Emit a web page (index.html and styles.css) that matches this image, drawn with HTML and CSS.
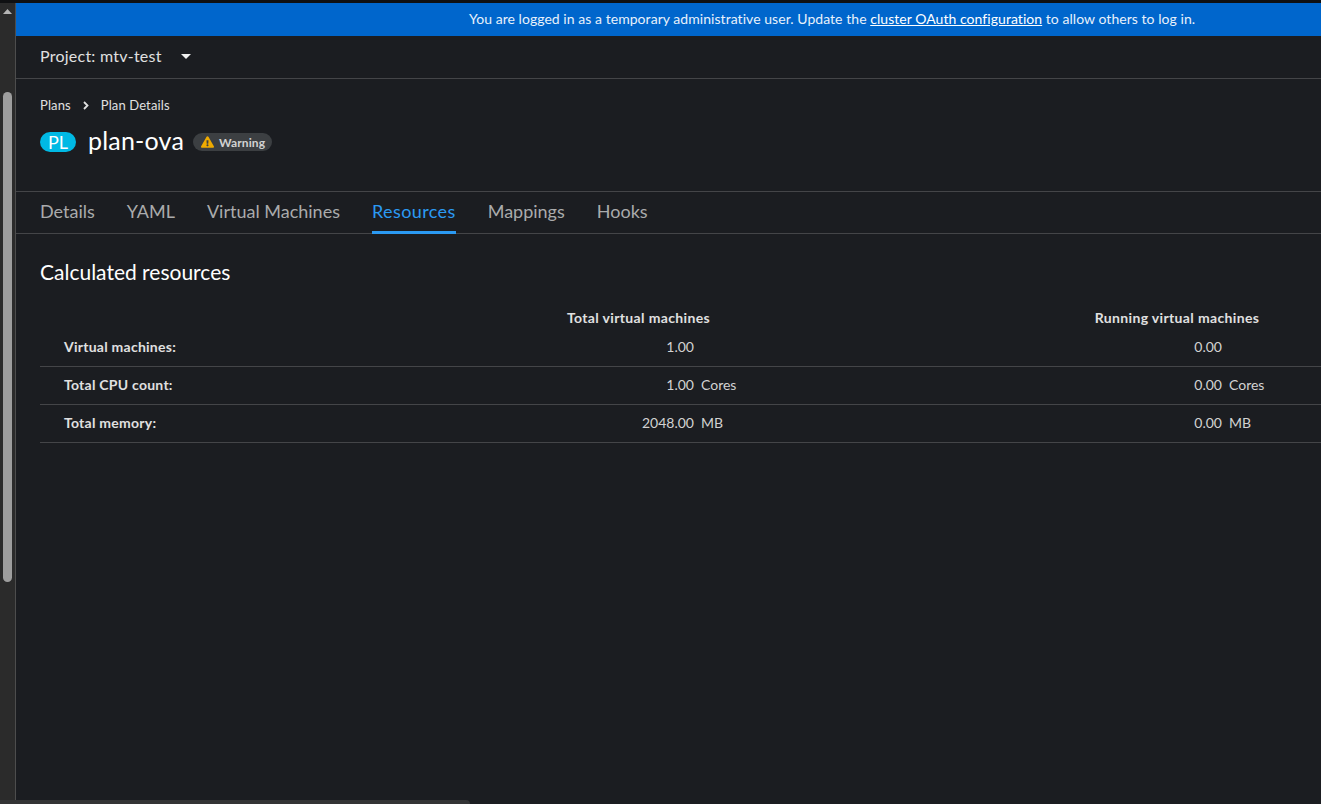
FILE: index.html
```html
<!DOCTYPE html>
<html lang="en">
<head>
<meta charset="utf-8">
<title>plan-ova</title>
<link rel="stylesheet" href="styles.css">
</head>
<body>
<div class="app">
  <aside class="vscroll">
    <svg class="vscroll-arrow" width="9" height="5" viewBox="0 0 9 5"><polygon points="4.5,0 9,5 0,5"/></svg>
    <div class="vscroll-thumb"></div>
  </aside>
  <main class="content">
    <div class="banner"><span>You are logged in as a temporary administrative user. Update the <a class="banner-link" href="#">cluster OAuth configuration</a> to allow others to log in.</span></div>
    <div class="project-bar">
      <span class="project-name">Project: mtv-test</span>
      <svg class="caret" width="10" height="5" viewBox="0 0 10 5"><polygon points="0,0 10,0 5,5"/></svg>
    </div>
    <header class="page-head">
      <nav class="breadcrumb">
        <span>Plans</span>
        <svg class="crumb-sep" width="6" height="9" viewBox="0 0 6 9"><polyline points="1,1 4.5,4.5 1,8"/></svg>
        <span>Plan Details</span>
      </nav>
      <div class="title-row">
        <span class="res-badge">PL</span>
        <h1 class="title">plan-ova</h1>
        <span class="status">
          <svg class="warn-icon" width="13" height="12" viewBox="0 0 576 512"><path d="M569.517 440.013C587.975 472.007 564.806 512 527.94 512H48.054c-36.937 0-59.999-40.055-41.577-71.987L246.423 24c18.467-32.009 64.72-31.951 83.154 0l239.94 416.013zM288 354c-25.405 0-46 20.595-46 46s20.595 46 46 46 46-20.595 46-46-20.595-46-46-46zm-43.673-165.346l7.418 136c.347 6.364 5.609 11.346 11.982 11.346h48.546c6.373 0 11.635-4.982 11.982-11.346l7.418-136c.375-6.874-5.098-12.654-11.982-12.654h-63.383c-6.884 0-12.356 5.78-11.981 12.654z"/></svg>
          Warning
        </span>
      </div>
    </header>
    <nav class="tabs">
      <a class="tab">Details</a>
      <a class="tab">YAML</a>
      <a class="tab">Virtual Machines</a>
      <a class="tab tab-active">Resources</a>
      <a class="tab">Mappings</a>
      <a class="tab">Hooks</a>
    </nav>
    <section class="section">
      <h2 class="section-title">Calculated resources</h2>
      <div class="table-head">
        <span></span>
        <span class="th">Total virtual machines</span>
        <span class="th">Running virtual machines</span>
      </div>
      <div class="table-row">
        <span class="label">Virtual machines:</span>
        <span class="num">1.00</span><span class="unit"></span>
        <span class="num">0.00</span><span class="unit"></span>
      </div>
      <div class="table-row">
        <span class="label">Total CPU count:</span>
        <span class="num">1.00</span><span class="unit">Cores</span>
        <span class="num">0.00</span><span class="unit">Cores</span>
      </div>
      <div class="table-row">
        <span class="label">Total memory:</span>
        <span class="num">2048.00</span><span class="unit">MB</span>
        <span class="num">0.00</span><span class="unit">MB</span>
      </div>
    </section>
  </main>
</div>
<div class="hscroll"></div>
</body>
</html>
```

FILE: styles.css
```css
* { box-sizing: border-box; }
html, body { margin: 0; height: 100%; overflow: hidden; }
body {
  background: #1b1d21;
  color: #e0e0e0;
  font-family: "Lato", "Liberation Sans", sans-serif;
  font-size: 14px;
  position: relative;
}
.app { display: flex; height: 100%; padding-top: 3px; background: #0f1012; }
.vscroll {
  flex: 0 0 16px;
  background: #2b2b2b;
  border-right: 1px solid #4d4d4d;
  display: flex;
  flex-direction: column;
  align-items: center;
  padding-top: 6px;
  padding-right: 1px;
}
.vscroll-arrow { fill: #b5b5b5; display: block; }
.vscroll-thumb {
  width: 9px;
  height: 490px;
  margin-top: 78px;
  border-radius: 5px;
  background: #9e9e9e;
}
.content { flex: 1; min-width: 0; background: #1b1d21; overflow: hidden; }
.banner {
  height: 33px;
  background: #0066cc;
  color: #e8f1fb;
  display: flex;
  align-items: center;
  justify-content: center;
  padding: 0 0 3px 327px;
  letter-spacing: .05px;
  white-space: pre;
}
.banner-link { color: #fff; text-decoration: underline; }
.project-bar {
  height: 43px;
  border-bottom: 1px solid #444548;
  display: flex;
  align-items: center;
  padding: 0 0 2px 24px;
  font-size: 16px;
  letter-spacing: .24px;
  color: #e0e0e0;
}
.project-name { padding-bottom: 2px; }
.caret { fill: #f0f0f0; margin-left: 19px; }
.page-head { height: 113px; border-bottom: 1px solid #444548; padding: 18px 24px 0; }
.breadcrumb { display: flex; align-items: center; gap: 12px; font-size: 13px; letter-spacing: .12px; height: 16px; color: #e0e0e0; }
.crumb-sep { fill: none; stroke: #e0e0e0; stroke-width: 1.8; }
.title-row { display: flex; align-items: center; margin-top: 15px; height: 28px; }
.res-badge {
  width: 36px;
  height: 20px;
  border-radius: 10px;
  background: #00b9e4;
  color: #fff;
  font-size: 18px;
  display: flex;
  align-items: center;
  justify-content: center;
}
.title { margin: 0 0 4px 12px; font-size: 25px; letter-spacing: .2px; font-weight: 400; color: #fff; }
.status {
  margin-left: 9px;
  height: 18px;
  width: 79px;
  border-radius: 9px;
  background: #3c3f42;
  color: #d2d2d2;
  font-size: 12px;
  letter-spacing: .1px;
  font-weight: 700;
  display: flex;
  align-items: center;
  gap: 5px;
  padding-left: 8px;
}
.warn-icon { fill: #f0ab00; }
.tabs { height: 42px; border-bottom: 1px solid #444548; display: flex; gap: 32px; padding-left: 24px; }
.tab { display: flex; align-items: center; height: 42px; padding-bottom: 4px; font-size: 18px; color: #aaabac; }
.tab-active { color: #2b9af3; border-bottom: 3px solid #2b9af3; padding: 0 0 1px; letter-spacing: .4px; }
.section { padding: 0 0 0 24px; }
.section-title { margin: 26px 0 0; font-size: 21px; font-weight: 400; color: #fff; height: 24px; line-height: 24px; }
.table-head {
  display: grid;
  grid-template-columns: 270px 657px 420px;
  margin-top: 24px;
  height: 21px;
  padding-bottom: 3px;
  align-items: center;
  font-size: 14px;
  letter-spacing: .35px;
  font-weight: 700;
  color: #e0e0e0;
}
.th { text-align: center; white-space: nowrap; }
.table-row {
  display: grid;
  grid-template-columns: 270px 384px 200px 328px 100px;
  height: 38px;
  padding-bottom: 2px;
  align-items: center;
  width: 1281px;
  border-bottom: 1px solid #444548;
  font-size: 14px;
  color: #d2d2d2;
}
.label { padding-left: 24px; font-weight: 700; letter-spacing: .25px; color: #e0e0e0; }
.num { text-align: right; }
.unit { padding-left: 7px; }
.hscroll {
  position: absolute;
  left: 0;
  bottom: 0;
  width: 470px;
  height: 4px;
  background: #333435;
  border-top-right-radius: 4px;
}
```
